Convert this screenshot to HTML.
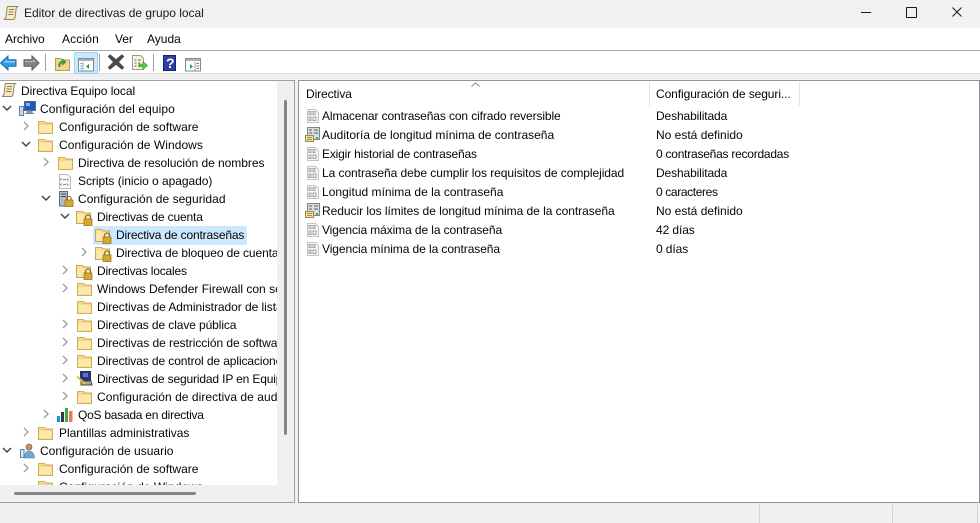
<!DOCTYPE html>
<html lang="es"><head><meta charset="utf-8"><title>Editor de directivas de grupo local</title>
<style>
html,body{margin:0;padding:0;width:980px;height:523px;overflow:hidden;background:#f0f0f0}
body{position:relative;font:12px/18px "Liberation Sans",sans-serif;color:#050505;letter-spacing:-.1px}
div,span.t,svg.i{position:absolute}
span.t{white-space:nowrap;height:18px}
svg.i{overflow:visible}
</style></head><body>
<svg width="0" height="0" style="position:absolute">
<defs>
<symbol id="cr" viewBox="0 0 10 10"><path d="M3 1l4 4-4 4" fill="none" stroke="#a0a0a0" stroke-width="1.4"/></symbol>
<symbol id="cd" viewBox="0 0 10 10"><path d="M1 3l4 4 4-4" fill="none" stroke="#404040" stroke-width="1.4"/></symbol>
<symbol id="f" viewBox="0 0 15 14"><path d="M.5 13.5V1.500h6l1.500 1.500h6.500v10.500z" fill="#fbe08f" stroke="#d0ad5c"/><path d="M1.500 4.500h12V12.500h-12z" fill="#fde8aa"/><path d="M1 4h13" stroke="#e6c777"/></symbol>
<symbol id="lf" viewBox="0 0 17 16"><path d="M.5 13.500V1.500h6l1.500 1.500h6.500v10.500z" fill="#fbe08f" stroke="#c2a661"/><path d="M1.500 4.500h12V12.500h-12z" fill="#fde8aa"/><path d="M9.500 9V7.500a2.500 2.500 0 015 0V9" fill="none" stroke="#8a7230" stroke-width="1.300"/><rect x="8" y="9" width="8" height="6.500" fill="#d6a92c" stroke="#8f6d14" stroke-width=".7"/></symbol>
<symbol id="p" viewBox="0 0 14 14"><path d="M1.500.5h8l3 3v10h-11z" fill="#f8f8f8" stroke="#c4c4c4"/><path d="M3 2.500h2v3H3zM7 2.500h2v3H7zM3 8h2v3.500H3zM7 8h3v3.500H7z" fill="none" stroke="#a2a2a2"/></symbol>
<symbol id="s" viewBox="0 0 15 15"><rect x="2.500" y=".5" width="12" height="12" fill="#d8dde0" stroke="#7c8488"/><path d="M4 3h3M9 3h4M4 6h3M9 6h4" stroke="#566064"/><path d="M.5 8.500h8v6h-8z" fill="#f2dfa4" stroke="#9a8a56"/><path d="M2 10.500h5M2 12.500h5" stroke="#a58f4d"/><rect x="11" y="10" width="2" height="2" fill="#37b34a"/></symbol>
<symbol id="scroll" viewBox="0 0 16 16"><path d="M4.500 1.500h10c-1.500 1-1.500 2-1.500 3l-1 8c-.3 1.500-1 2-2 2h-9c1-.5 1.700-1.200 2-2.500l1-8c.1-1.200.3-2 .5-2.500z" fill="#f6e9c4" stroke="#938460"/><path d="M6 4.500h5M5.500 7h5M5.300 9.500h5" stroke="#8c7d58"/></symbol>
</defs></svg>

<!-- title bar -->
<div style="left:0;top:0;width:980px;height:28px;background:#f1f1f1"></div>
<svg class="i" style="left:3px;top:5px" width="16" height="16"><use href="#scroll"/></svg>
<span class="t" style="left:24px;top:4px;color:#1a1a1a;letter-spacing:-.03px">Editor de directivas de grupo local</span>
<div style="left:861px;top:12px;width:10px;height:1px;background:#1a1a1a"></div>
<div style="left:906px;top:7px;width:9px;height:9px;border:1px solid #1a1a1a;border-radius:1px"></div>
<svg class="i" style="left:952px;top:7px" width="10" height="10"><path d="M.5.5l9 9M9.500.5l-9 9" stroke="#1a1a1a" fill="none"/></svg>

<!-- menu -->
<div style="left:0;top:28px;width:980px;height:22px;background:#fff"></div>
<span class="t" style="left:5px;top:30px;letter-spacing:-.05px">Archivo</span>
<span class="t" style="left:62px;top:30px;letter-spacing:.15px">Acción</span>
<span class="t" style="left:115px;top:30px">Ver</span>
<span class="t" style="left:147px;top:30px;letter-spacing:0">Ayuda</span>
<div style="left:0;top:50px;width:980px;height:1px;background:#a8a8a8"></div>

<!-- toolbar -->
<div style="left:0;top:51px;width:980px;height:22px;background:#fff"></div>
<div style="left:0;top:73px;width:980px;height:1px;background:#dcdcdc"></div>
<svg class="i" style="left:0;top:55px" width="17" height="16"><path d="M.5 8L8 1V4.800h8v6.400H8V15z" fill="#2f9be4" stroke="#1d6fb0"/><path d="M3 8l4-3.500V6h8v1.500H4z" fill="#8fd0f5"/></svg>
<svg class="i" style="left:23px;top:55px" width="17" height="16"><path d="M16 8L9 1V4.800H1v6.400h8V15z" fill="#858585" stroke="#5a5a5a"/><path d="M2 6h8V4l3 3H2z" fill="#b5b5b5"/></svg>
<div style="left:45px;top:54px;width:1px;height:17px;background:#a0a0a0"></div>
<svg class="i" style="left:55px;top:56px" width="15" height="15"><path d="M.5 14.500V2.500h5l1.500 1.500h7.500v10.500z" fill="#f3d58c" stroke="#b39a5e"/><path d="M3.500 10c0-3 1.500-5 4-5V3l3.500 3-3.500 3V7c-1.500 0-2.500 1-2.500 4z" fill="#3fae49" stroke="#2a7e33" stroke-width=".6"/></svg>
<div style="left:74px;top:52px;width:22px;height:20px;background:#cce8ff;border:1px solid #99d1ff;border-radius:2px"></div>
<svg class="i" style="left:78px;top:58px" width="16" height="14"><rect x=".5" y=".5" width="15" height="12.500" fill="#fff" stroke="#7f8c93"/><path d="M1 1h14v2H1z" fill="#a8b3b9"/><path d="M5 4v9" stroke="#9aa6ac"/><path d="M2.500 5.500h1.500M2.500 8h1.500M2.500 10.500h1.500" stroke="#5d7fa6"/><path d="M11 6v5L8 8.500z" fill="#22a83a"/></svg>
<div style="left:99px;top:54px;width:1px;height:17px;background:#a0a0a0"></div>
<svg class="i" style="left:108px;top:54px" width="16" height="16"><path d="M2 .5l6 5 6-5 2 2-5.300 5.500L16 13.500l-2 2-6-5-6 5-2-2L5.300 8 0 2.500z" fill="#4b4b4b" stroke="#333" stroke-width=".5"/></svg>
<svg class="i" style="left:131px;top:55px" width="17" height="16"><path d="M1.500.5h8l3 3v11h-11z" fill="#fbf6e2" stroke="#a09a80"/><path d="M3.500 5h2M7 5h3M3.500 8h2M7 8h2M3.500 11h2M7 11h2" stroke="#5f5f5f"/><path d="M8 9h4V6.500l4.500 4-4.500 4V12H8z" fill="#55c848" stroke="#3a9a30" stroke-width=".6"/></svg>
<div style="left:153px;top:54px;width:1px;height:17px;background:#a0a0a0"></div>
<div style="left:163px;top:55px;width:13px;height:16px;background:#2e3f9e;border:.5px solid #16226e;box-sizing:border-box"></div>
<span class="t" style="left:166px;top:54px;color:#fff;font-weight:bold;font-size:14px">?</span>
<svg class="i" style="left:185px;top:58px" width="16" height="14"><rect x=".5" y=".5" width="15" height="12.500" fill="#fff" stroke="#7f8c93"/><path d="M1 1h14v2H1z" fill="#a8b3b9"/><path d="M10 4v9" stroke="#9aa6ac"/><path d="M11.500 5.500h2.500M11.500 8h2.500M11.500 10.500h2.500" stroke="#5d7fa6"/><path d="M5 6v5l3-2.500z" fill="#22a83a"/></svg>

<!-- left pane -->
<div style="left:-1px;top:80px;width:295px;height:421px;border:1px solid #a0a0a0;border-width:1px 1px 1px 0;background:#f0f0f0"></div>
<div style="left:0;top:81px;width:277px;height:404px;background:#fff;border-bottom-right-radius:2px"></div>
<div style="left:284px;top:100px;width:3px;height:335px;background:#858585;border-radius:2px"></div>
<div style="left:14px;top:492px;width:182px;height:3px;background:#858585;border-radius:2px"></div>
<div style="left:93px;top:226px;width:154px;height:19px;background:#cce8ff;border-radius:2px"></div>

<div style="left:0;top:81px;width:277px;height:404px;overflow:hidden">
<div style="left:0;top:-81px;width:277px;height:520px">
<svg class="i" style="left:1px;top:82px" width="16" height="16"><use href="#scroll"/></svg><span class="t" style="left:21px;top:82px;letter-spacing:-.06px">Directiva Equipo local</span>

<svg class="i" style="left:2px;top:103px" width="10" height="10"><use href="#cd"/></svg>
<svg class="i" style="left:19px;top:101px" width="17" height="15"><rect x="5.500" y=".5" width="11" height="9" fill="#1d58c8" stroke="#5e6a75"/><path d="M7 2h4v3H7z" fill="#83b8f0"/><path d="M8 10h5v2H8zM6 12.500h9" stroke="#77818a" fill="#a8b2ba"/><rect x=".5" y="5.500" width="4" height="9" fill="#cfd6dc" stroke="#4f87b8"/></svg>
<span class="t" style="left:40px;top:100px;letter-spacing:.09px">Configuración del equipo</span>

<svg class="i" style="left:21px;top:121px" width="10" height="10"><use href="#cr"/></svg><svg class="i" style="left:38px;top:120px" width="15" height="14"><use href="#f"/></svg><span class="t" style="left:59px;top:118px;letter-spacing:0">Configuración de software</span>
<svg class="i" style="left:21px;top:139px" width="10" height="10"><use href="#cd"/></svg><svg class="i" style="left:38px;top:138px" width="15" height="14"><use href="#f"/></svg><span class="t" style="left:59px;top:136px;letter-spacing:.05px">Configuración de Windows</span>
<svg class="i" style="left:41px;top:157px" width="10" height="10"><use href="#cr"/></svg><svg class="i" style="left:58px;top:156px" width="15" height="14"><use href="#f"/></svg><span class="t" style="left:78px;top:154px;letter-spacing:-.05px">Directiva de resolución de nombres</span>

<svg class="i" style="left:58px;top:174px" width="14" height="15"><path d="M1.500.5h8l3 3v11h-11z" fill="#fbfbfb" stroke="#b8b8b8"/><path d="M3.500 4.500l-1 1 1 1M5 5.500h3M9 4.500l1 1-1 1M3.500 9.500l-1 1 1 1M5 10.500h3M9 9.500l1 1-1 1" fill="none" stroke="#8a8a8a"/></svg>
<span class="t" style="left:78px;top:172px;letter-spacing:-.04px">Scripts (inicio o apagado)</span>

<svg class="i" style="left:41px;top:193px" width="10" height="10"><use href="#cd"/></svg>
<svg class="i" style="left:59px;top:191px" width="14" height="16"><rect x=".5" y=".5" width="8" height="14.500" fill="#b5bec4" stroke="#5f6a70"/><path d="M2 3h5M2 5.500h5" stroke="#3e484d"/><path d="M7.500 9V7.700a2.300 2.300 0 014.600 0V9" fill="none" stroke="#8a7230" stroke-width="1.200"/><rect x="6" y="9" width="8" height="6.500" fill="#d6a92c" stroke="#8f6d14" stroke-width=".7"/></svg>
<span class="t" style="left:78px;top:190px;letter-spacing:.03px">Configuración de seguridad</span>

<svg class="i" style="left:60px;top:211px" width="10" height="10"><use href="#cd"/></svg><svg class="i" style="left:76px;top:210px" width="17" height="16"><use href="#lf"/></svg><span class="t" style="left:97px;top:208px;letter-spacing:-.15px">Directivas de cuenta</span>
<svg class="i" style="left:95px;top:228px" width="17" height="16"><use href="#lf"/></svg><span class="t" style="left:116px;top:226px;letter-spacing:-.16px">Directiva de contraseñas</span>
<svg class="i" style="left:79px;top:247px" width="10" height="10"><use href="#cr"/></svg><svg class="i" style="left:95px;top:246px" width="17" height="16"><use href="#lf"/></svg><span class="t" style="left:116px;top:244px;letter-spacing:-.1px">Directiva de bloqueo de cuenta</span>
<svg class="i" style="left:60px;top:265px" width="10" height="10"><use href="#cr"/></svg><svg class="i" style="left:76px;top:264px" width="17" height="16"><use href="#lf"/></svg><span class="t" style="left:97px;top:262px;letter-spacing:-.2px">Directivas locales</span>
<svg class="i" style="left:60px;top:283px" width="10" height="10"><use href="#cr"/></svg><svg class="i" style="left:77px;top:282px" width="15" height="14"><use href="#f"/></svg><span class="t" style="left:97px;top:280px;letter-spacing:0">Windows Defender Firewall con seguridad avanzada</span>
<svg class="i" style="left:77px;top:300px" width="15" height="14"><use href="#f"/></svg><span class="t" style="left:97px;top:298px;letter-spacing:-.05px">Directivas de Administrador de listas de redes</span>
<svg class="i" style="left:60px;top:319px" width="10" height="10"><use href="#cr"/></svg><svg class="i" style="left:77px;top:318px" width="15" height="14"><use href="#f"/></svg><span class="t" style="left:97px;top:316px">Directivas de clave pública</span>
<svg class="i" style="left:60px;top:337px" width="10" height="10"><use href="#cr"/></svg><svg class="i" style="left:77px;top:336px" width="15" height="14"><use href="#f"/></svg><span class="t" style="left:97px;top:334px;letter-spacing:-.05px">Directivas de restricción de software</span>
<svg class="i" style="left:60px;top:355px" width="10" height="10"><use href="#cr"/></svg><svg class="i" style="left:77px;top:354px" width="15" height="14"><use href="#f"/></svg><span class="t" style="left:97px;top:352px">Directivas de control de aplicaciones</span>
<svg class="i" style="left:60px;top:373px" width="10" height="10"><use href="#cr"/></svg>
<svg class="i" style="left:76px;top:371px" width="17" height="16"><rect x="4.500" y=".5" width="10" height="9" fill="#23348f" stroke="#333"/><path d="M7 3h5M7 5h5" stroke="#9db5ea"/><path d="M5 10h10l1 4H5z" fill="#a9a9a9" stroke="#444"/><path d="M1 5.500l5 4.500 3 3" stroke="#e8c61a" stroke-width="2" fill="none"/></svg>
<span class="t" style="left:97px;top:370px;letter-spacing:-.15px">Directivas de seguridad IP en Equipo local</span>
<svg class="i" style="left:60px;top:391px" width="10" height="10"><use href="#cr"/></svg><svg class="i" style="left:77px;top:390px" width="15" height="14"><use href="#f"/></svg><span class="t" style="left:97px;top:388px;letter-spacing:.05px">Configuración de directiva de auditoría avanzada</span>

<svg class="i" style="left:41px;top:409px" width="10" height="10"><use href="#cr"/></svg>
<svg class="i" style="left:57px;top:407px" width="16" height="16"><rect x="0" y="9" width="3" height="6" fill="#1f8fd8"/><rect x="4" y="5" width="3" height="10" fill="#2a3b48"/><rect x="8" y="1" width="3" height="14" fill="#3aae49"/><rect x="12" y="4" width="3.500" height="11" fill="#ee7a5c"/></svg>
<span class="t" style="left:78px;top:406px;letter-spacing:-.25px">QoS basada en directiva</span>

<svg class="i" style="left:21px;top:427px" width="10" height="10"><use href="#cr"/></svg><svg class="i" style="left:38px;top:426px" width="15" height="14"><use href="#f"/></svg><span class="t" style="left:59px;top:424px;letter-spacing:-.04px">Plantillas administrativas</span>

<svg class="i" style="left:2px;top:445px" width="10" height="10"><use href="#cd"/></svg>
<svg class="i" style="left:20px;top:443px" width="15" height="16"><rect x=".5" y="6.500" width="3.500" height="8" fill="#dfe6ec" stroke="#4f87b8"/><circle cx="9" cy="4" r="3" fill="#c98f6a" stroke="#6b5040" stroke-width=".6"/><path d="M4.500 15c0-5 2-7 4.500-7s5 2 5.500 7z" fill="#6fa6d6" stroke="#4d7ea8" stroke-width=".6"/></svg>
<span class="t" style="left:40px;top:442px;letter-spacing:0">Configuración de usuario</span>

<svg class="i" style="left:21px;top:463px" width="10" height="10"><use href="#cr"/></svg><svg class="i" style="left:38px;top:462px" width="15" height="14"><use href="#f"/></svg><span class="t" style="left:59px;top:460px;letter-spacing:0">Configuración de software</span>
<svg class="i" style="left:38px;top:480px" width="15" height="14"><use href="#f"/></svg><span class="t" style="left:59px;top:478px;letter-spacing:.05px">Configuración de Windows</span>
</div></div>

<!-- right pane -->
<div style="left:298px;top:80px;width:680px;height:421px;background:#fff;border:1px solid #8f9498"></div>
<svg class="i" style="left:471px;top:82px" width="9" height="5"><path d="M.5 4.500L4.500.8l4 3.700" fill="none" stroke="#8a8a8a"/></svg>
<div style="left:649px;top:82px;width:1px;height:24px;background:#e5e5e5"></div>
<div style="left:799px;top:82px;width:1px;height:24px;background:#e5e5e5"></div>
<span class="t" style="left:306px;top:85px;letter-spacing:-.09px">Directiva</span>
<span class="t" style="left:656px;top:85px;letter-spacing:-.08px">Configuración de seguri...</span>

<svg class="i" style="left:306px;top:109px" width="14" height="14"><use href="#p"/></svg><span class="t" style="left:322px;top:107px;letter-spacing:-.11px">Almacenar contraseñas con cifrado reversible</span><span class="t" style="left:656px;top:107px;letter-spacing:-.12px">Deshabilitada</span>
<svg class="i" style="left:305px;top:127px" width="15" height="15"><use href="#s"/></svg><span class="t" style="left:322px;top:126px;letter-spacing:0">Auditoría de longitud mínima de contraseña</span><span class="t" style="left:656px;top:126px;letter-spacing:0">No está definido</span>
<svg class="i" style="left:306px;top:147px" width="14" height="14"><use href="#p"/></svg><span class="t" style="left:322px;top:145px;letter-spacing:-.17px">Exigir historial de contraseñas</span><span class="t" style="left:656px;top:145px;letter-spacing:-.24px">0 contraseñas recordadas</span>
<svg class="i" style="left:306px;top:166px" width="14" height="14"><use href="#p"/></svg><span class="t" style="left:322px;top:164px;letter-spacing:-.06px">La contraseña debe cumplir los requisitos de complejidad</span><span class="t" style="left:656px;top:164px;letter-spacing:-.12px">Deshabilitada</span>
<svg class="i" style="left:306px;top:185px" width="14" height="14"><use href="#p"/></svg><span class="t" style="left:322px;top:183px;letter-spacing:.02px">Longitud mínima de la contraseña</span><span class="t" style="left:656px;top:183px;letter-spacing:-.37px">0 caracteres</span>
<svg class="i" style="left:305px;top:203px" width="15" height="15"><use href="#s"/></svg><span class="t" style="left:322px;top:202px;letter-spacing:-.04px">Reducir los límites de longitud mínima de la contraseña</span><span class="t" style="left:656px;top:202px;letter-spacing:0">No está definido</span>
<svg class="i" style="left:306px;top:223px" width="14" height="14"><use href="#p"/></svg><span class="t" style="left:322px;top:221px">Vigencia máxima de la contraseña</span><span class="t" style="left:656px;top:221px">42 días</span>
<svg class="i" style="left:306px;top:242px" width="14" height="14"><use href="#p"/></svg><span class="t" style="left:322px;top:240px;letter-spacing:-.08px">Vigencia mínima de la contraseña</span><span class="t" style="left:656px;top:240px">0 días</span>

<!-- status bar -->
<div style="left:0;top:503px;width:980px;height:20px;background:#f0f0f0"></div>
<div style="left:759px;top:505px;width:1px;height:18px;background:#d4d4d4"></div>
<div style="left:892px;top:505px;width:1px;height:18px;background:#d4d4d4"></div>
<div style="left:977px;top:505px;width:1px;height:18px;background:#d4d4d4"></div>
</body></html>
